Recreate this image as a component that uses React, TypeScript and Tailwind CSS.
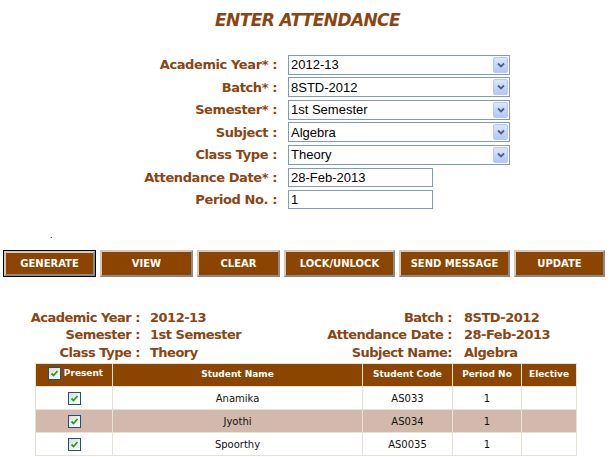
import React from 'react';

const brown = 'text-[#8b4513]';

const Arrow: React.FC = () => (
  <span className="ml-auto mr-[1px] flex h-[16px] w-[15px] items-center justify-center rounded-[2px] border border-[#b8c9f3] bg-gradient-to-b from-[#dbe5fd] to-[#b3c6f5]">
    <svg width="8" height="6" viewBox="0 0 8 6">
      <path d="M1 1.5 L4 4.5 L7 1.5" stroke="#4d6185" strokeWidth="1.8" fill="none" />
    </svg>
  </span>
);

const Select: React.FC<{ value: string }> = ({ value }) => (
  <div className="flex h-[20px] w-[222px] items-center border border-[#7f9db9] bg-white pl-[2px] font-['Liberation_Sans',Arial,sans-serif] text-[13px] text-black">
    {value}
    <Arrow />
  </div>
);

const Input: React.FC<{ value: string }> = ({ value }) => (
  <div className="flex h-[19px] w-[145px] items-center border border-[#7f9db9] bg-white pl-[2px] font-['Liberation_Sans',Arial,sans-serif] text-[13px] text-black">
    {value}
  </div>
);

const Check: React.FC = () => (
  <span className="inline-flex h-[13px] w-[13px] items-center justify-center border border-[#1c5180] bg-gradient-to-br from-[#dcdcd7] to-white">
    <svg width="9" height="9" viewBox="0 0 9 9">
      <path d="M1.5 4.5 L3.5 6.5 L7.5 2" stroke="#21a121" strokeWidth="1.8" fill="none" />
    </svg>
  </span>
);

const formRows: [string, React.ReactNode][] = [
  ['Academic Year* :', <Select value="2012-13" />],
  ['Batch* :', <Select value="8STD-2012" />],
  ['Semester* :', <Select value="1st Semester" />],
  ['Subject :', <Select value="Algebra" />],
  ['Class Type :', <Select value="Theory" />],
  ['Attendance Date* :', <Input value="28-Feb-2013" />],
  ['Period No. :', <Input value="1" />],
];

const buttons: [string, string][] = [
  ['VIEW', 'w-[93px]'],
  ['CLEAR', 'w-[83px]'],
  ['LOCK/UNLOCK', 'w-[111px]'],
  ['SEND MESSAGE', 'w-[111px]'],
  ['UPDATE', 'w-[91px]'],
];

const students = [
  { name: 'Anamika', code: 'AS033' },
  { name: 'Jyothi', code: 'AS034' },
  { name: 'Spoorthy', code: 'AS0035' },
];

export default function App() {
  return (
    <div className="h-[457px] w-[615px] overflow-hidden bg-white font-['DejaVu_Sans',Verdana,sans-serif]">
      <h1 className={`pt-[10px] text-center text-[17px] font-bold italic leading-[20px] tracking-[-0.6px] ${brown}`}>
        ENTER ATTENDANCE
      </h1>

      <div className="mt-[25px] flex flex-col gap-y-[3px]">
        {formRows.map(([label, control], i) => (
          <div key={i} className="flex h-[19.5px] items-center">
            <span className={`w-[277px] text-right text-[13px] font-bold tracking-[-0.4px] ${brown}`}>{label}</span>
            <span className="ml-[11px]">{control}</span>
          </div>
        ))}
      </div>

      <div className="ml-[50px] mt-[21px] h-[10px] text-[8px] leading-[10px] text-black">.</div>

      <div className="mt-[9px] flex items-start gap-[4px] pl-[3px]">
        <div className="border border-black">
          <button className="flex h-[25px] w-[91px] items-center justify-center border-2 border-t-[#d8c8b8] border-l-[#d8c8b8] border-b-[#8a8a8a] border-r-[#8a8a8a] bg-[#8b4500] text-[10px] font-bold text-white">
            GENERATE
          </button>
        </div>
        {buttons.map(([label, w]) => (
          <button
            key={label}
            className={`flex h-[27px] ${w} items-center justify-center border-2 border-t-[#d8c8b8] border-l-[#d8c8b8] border-b-[#8a8a8a] border-r-[#8a8a8a] bg-[#8b4500] text-[10px] font-bold text-white`}
          >
            {label}
          </button>
        ))}
      </div>

      <div className={`mt-[32px] grid grid-cols-[140px_160px_152px_auto] text-[13px] font-bold leading-[17.5px] tracking-[-0.5px] ${brown}`}>
        <span className="text-right">Academic Year :</span>
        <span className="pl-[10px]">2012-13</span>
        <span className="text-right">Batch :</span>
        <span className="pl-[12px]">8STD-2012</span>
        <span className="text-right">Semester :</span>
        <span className="pl-[10px]">1st Semester</span>
        <span className="text-right">Attendance Date :</span>
        <span className="pl-[12px]">28-Feb-2013</span>
        <span className="text-right">Class Type :</span>
        <span className="pl-[10px]">Theory</span>
        <span className="text-right">Subject Name:</span>
        <span className="pl-[12px]">Algebra</span>
      </div>

      <table className="ml-[35px] mt-[2px] w-[541px] table-fixed border-collapse border border-[#e2e2ee] text-center">
        <colgroup>
          <col className="w-[77px]" />
          <col className="w-[250px]" />
          <col className="w-[90px]" />
          <col className="w-[69px]" />
          <col className="w-[55px]" />
        </colgroup>
        <thead>
          <tr className="h-[23px] bg-[#8b4500] text-[9px] font-bold text-white">
            <th className="border border-[#e9e1d1]">
              <span className="inline-flex items-center gap-[3px] pl-[3px]">
                <Check />
                Present
              </span>
            </th>
            <th className="border border-[#e9e1d1]">Student Name</th>
            <th className="border border-[#e9e1d1]">Student Code</th>
            <th className="border border-[#e9e1d1]">Period No</th>
            <th className="border border-[#e9e1d1]">Elective</th>
          </tr>
        </thead>
        <tbody className="text-[10px] text-[#111]">
          {students.map((s, i) => (
            <tr key={s.code} className={`h-[23px] ${i % 2 === 1 ? 'bg-[#d2b9ab]' : 'bg-white'}`}>
              <td className="border border-[#e9e1d1]">
                <span className="flex justify-center">
                  <Check />
                </span>
              </td>
              <td className="border border-[#e9e1d1]">{s.name}</td>
              <td className="border border-[#e9e1d1]">{s.code}</td>
              <td className="border border-[#e9e1d1]">1</td>
              <td className="border border-[#e9e1d1]"></td>
            </tr>
          ))}
        </tbody>
      </table>
    </div>
  );
}
